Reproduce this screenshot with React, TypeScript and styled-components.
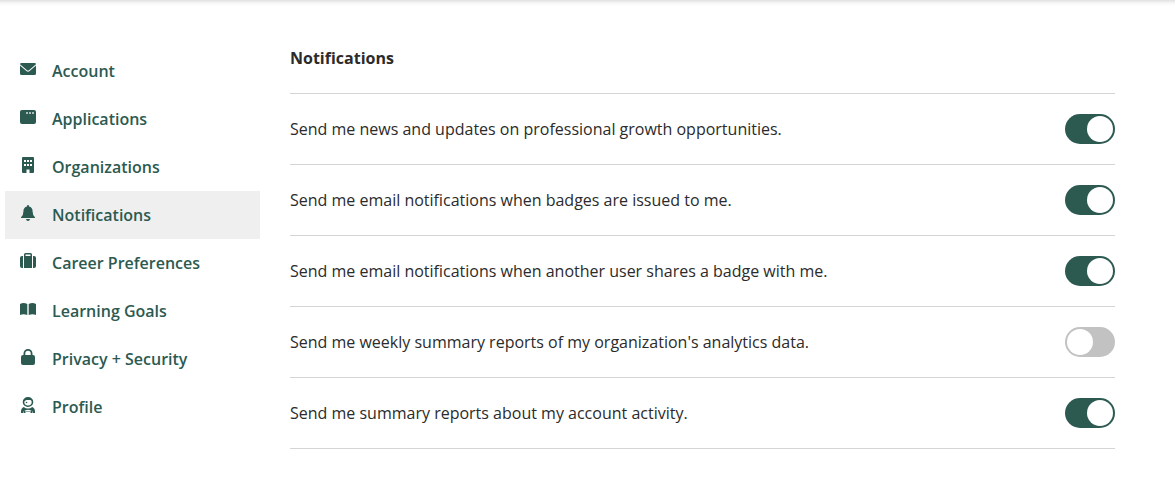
import React, { useState } from "react";
import styled, { createGlobalStyle } from "styled-components";

const green = "#2c5a51";

const GlobalStyle = createGlobalStyle`
  *, *::before, *::after { box-sizing: border-box; }
  body {
    margin: 0;
    background: #fff;
    color: #2b2b2b;
    font-family: "Open Sans", "Noto Sans", sans-serif;
    font-size: 16px;
    line-height: 24px;
  }
`;

const TopShadow = styled.div`
  height: 6px;
  background: linear-gradient(#e0e0e0, #f7f7f7 50%, #fff);
`;

const Page = styled.div`
  display: flex;
  gap: 30px;
  padding: 0 60px 48px 5px;
`;

const Sidebar = styled.nav`
  flex: 0 0 255px;
  padding-top: 41px;
`;

const NavList = styled.ul`
  list-style: none;
  margin: 0;
  padding: 0;
`;

const NavLink = styled.a<{ $active: boolean }>`
  display: flex;
  align-items: flex-start;
  gap: 16px;
  height: 48px;
  padding: 12px 15px;
  color: ${green};
  background: ${(p) => (p.$active ? "#efefef" : "transparent")};
  font-weight: 600;
  text-decoration: none;
`;

const NavIcon = styled.svg`
  flex: none;
  width: 16px;
  height: 16px;
  margin-top: 2px;
  fill: currentColor;
`;

const Main = styled.main`
  flex: 1;
  min-width: 0;
  padding-top: 40px;
`;

const Title = styled.h1`
  margin: 0;
  padding-bottom: 23px;
  border-bottom: 1px solid #d5d5d5;
  font-size: 16px;
  font-weight: 700;
`;

const SettingRow = styled.div`
  display: flex;
  align-items: center;
  justify-content: space-between;
  gap: 24px;
  min-height: 71px;
  border-bottom: 1px solid #d5d5d5;
`;

const SettingLabel = styled.label`
  cursor: pointer;
`;

const Toggle = styled.input`
  appearance: none;
  flex: none;
  width: 50px;
  height: 30px;
  margin: 0;
  padding: 2px;
  border-radius: 15px;
  background: #c2c2c2;
  cursor: pointer;

  &::before {
    content: "";
    display: block;
    width: 26px;
    height: 26px;
    border-radius: 50%;
    background: #fff;
  }

  &:checked {
    background: ${green};
  }

  &:checked::before {
    margin-left: 20px;
  }
`;

const icons: Record<string, React.ReactNode> = {
  Account: (
    <>
      <path d="M1.500 2h13Q16 2 16 3.200L9 9.300Q8 10.100 7 9.300L0 3.200Q0 2 1.500 2Z" />
      <path d="M0 4.400 6.400 10Q8 11.300 9.600 10L16 4.400V12.500Q16 14 14.500 14h-13Q0 14 0 12.500Z" />
    </>
  ),
  Applications: (
    <>
      <rect y="1" width="16" height="14" rx="2" />
      <path d="M6 3h2v2H6ZM9 3h2v2H9ZM12 3h2v2h-2Z" fill="#a9bcb8" />
    </>
  ),
  Organizations: (
    <path
      fillRule="evenodd"
      d="M3 0h10q1 0 1 1v14q0 1-1 1H9.500v-3.500h-3V16H3q-1 0-1-1V1q0-1 1-1ZM4 3v2h2V3ZM7 3v2h2V3ZM10 3v2h2V3ZM4 7v2h2V7ZM7 7v2h2V7ZM10 7v2h2V7Z"
    />
  ),
  Notifications: (
    <>
      <path d="M7 1q0-1 1-1t1 1v.5Q12.600 2.300 12.600 6.500q0 3.500 2 5.200.4.5.4 1.300H1q0-.8.4-1.300 2-1.700 2-5.200Q3.400 2.300 7 1.500Z" />
      <path d="M6 14h4Q9.600 16 8 16T6 14Z" />
    </>
  ),
  "Career Preferences": (
    <>
      <path
        fillRule="evenodd"
        d="M4 3V1.500Q4 0 5.500 0h5Q12 0 12 1.500V15H4ZM5.500 3h5V1.500h-5Z"
      />
      <path d="M3 3v12H2q-2 0-2-2V5q0-2 2-2ZM13 3h1q2 0 2 2v8q0 2-2 2h-1Z" />
    </>
  ),
  "Learning Goals": (
    <>
      <path d="M0 3q3.500-2 7.300 0v11Q3.500 12.500 0 14Z" />
      <path d="M8.700 3q3.800-2 7.300 0v11q-3.500-1.500-7.300 0Z" />
    </>
  ),
  "Privacy + Security": (
    <path
      fillRule="evenodd"
      d="M3.500 6V4.500a4.500 4.500 0 0 1 9 0V6H13q2 0 2 2v6q0 2-2 2H3q-2 0-2-2V8q0-2 2-2ZM5.300 6h5.400V4.500a2.700 2.700 0 0 0-5.400 0Z"
    />
  ),
  Profile: (
    <>
      <path
        fillRule="evenodd"
        d="M8 0a5.300 5 0 0 1 5.300 5A5.300 5 0 0 1 8 10 5.300 5 0 0 1 2.700 5 5.300 5 0 0 1 8 0ZM4.300 4.700Q4.300 8.500 8 8.500T11.700 4.700Q11.500 3.500 10.500 3H6.500Q4.700 3.500 4.300 4.700Z"
      />
      <circle cx="6.500" cy="5.500" r=".8" />
      <path d="M3.800 10Q5.500 11.500 8 11.500T12.200 10Q15 11.200 15 14.500V16H12.500V14.500Q11.500 12.800 8 12.800T3.500 14.500V16H1V14.500Q1 11.200 3.800 10Z" />
      <path d="M4 13.500h1.500V16H4ZM10.500 13.500H12V16h-1.500ZM6.500 14h1v1h-1ZM8.500 14h1v1h-1Z" />
    </>
  ),
};

const settings = [
  { id: "news", text: "Send me news and updates on professional growth opportunities.", on: true },
  { id: "issued", text: "Send me email notifications when badges are issued to me.", on: true },
  { id: "shared", text: "Send me email notifications when another user shares a badge with me.", on: true },
  { id: "analytics", text: "Send me weekly summary reports of my organization's analytics data.", on: false },
  { id: "activity", text: "Send me summary reports about my account activity.", on: true },
];

function Setting({ id, text, on }: { id: string; text: string; on: boolean }) {
  const [checked, setChecked] = useState(on);
  return (
    <SettingRow>
      <SettingLabel htmlFor={id}>{text}</SettingLabel>
      <Toggle
        id={id}
        type="checkbox"
        role="switch"
        checked={checked}
        onChange={(e) => setChecked(e.target.checked)}
      />
    </SettingRow>
  );
}

export default function App() {
  return (
    <>
      <GlobalStyle />
      <TopShadow />
      <Page>
        <Sidebar>
          <NavList>
            {Object.entries(icons).map(([name, icon]) => (
              <li key={name}>
                <NavLink
                  href="#"
                  $active={name === "Notifications"}
                  aria-current={name === "Notifications" ? "page" : undefined}
                >
                  <NavIcon viewBox="0 0 16 16" aria-hidden="true">
                    {icon}
                  </NavIcon>
                  {name}
                </NavLink>
              </li>
            ))}
          </NavList>
        </Sidebar>
        <Main>
          <Title>Notifications</Title>
          {settings.map((s) => (
            <Setting key={s.id} {...s} />
          ))}
        </Main>
      </Page>
    </>
  );
}
